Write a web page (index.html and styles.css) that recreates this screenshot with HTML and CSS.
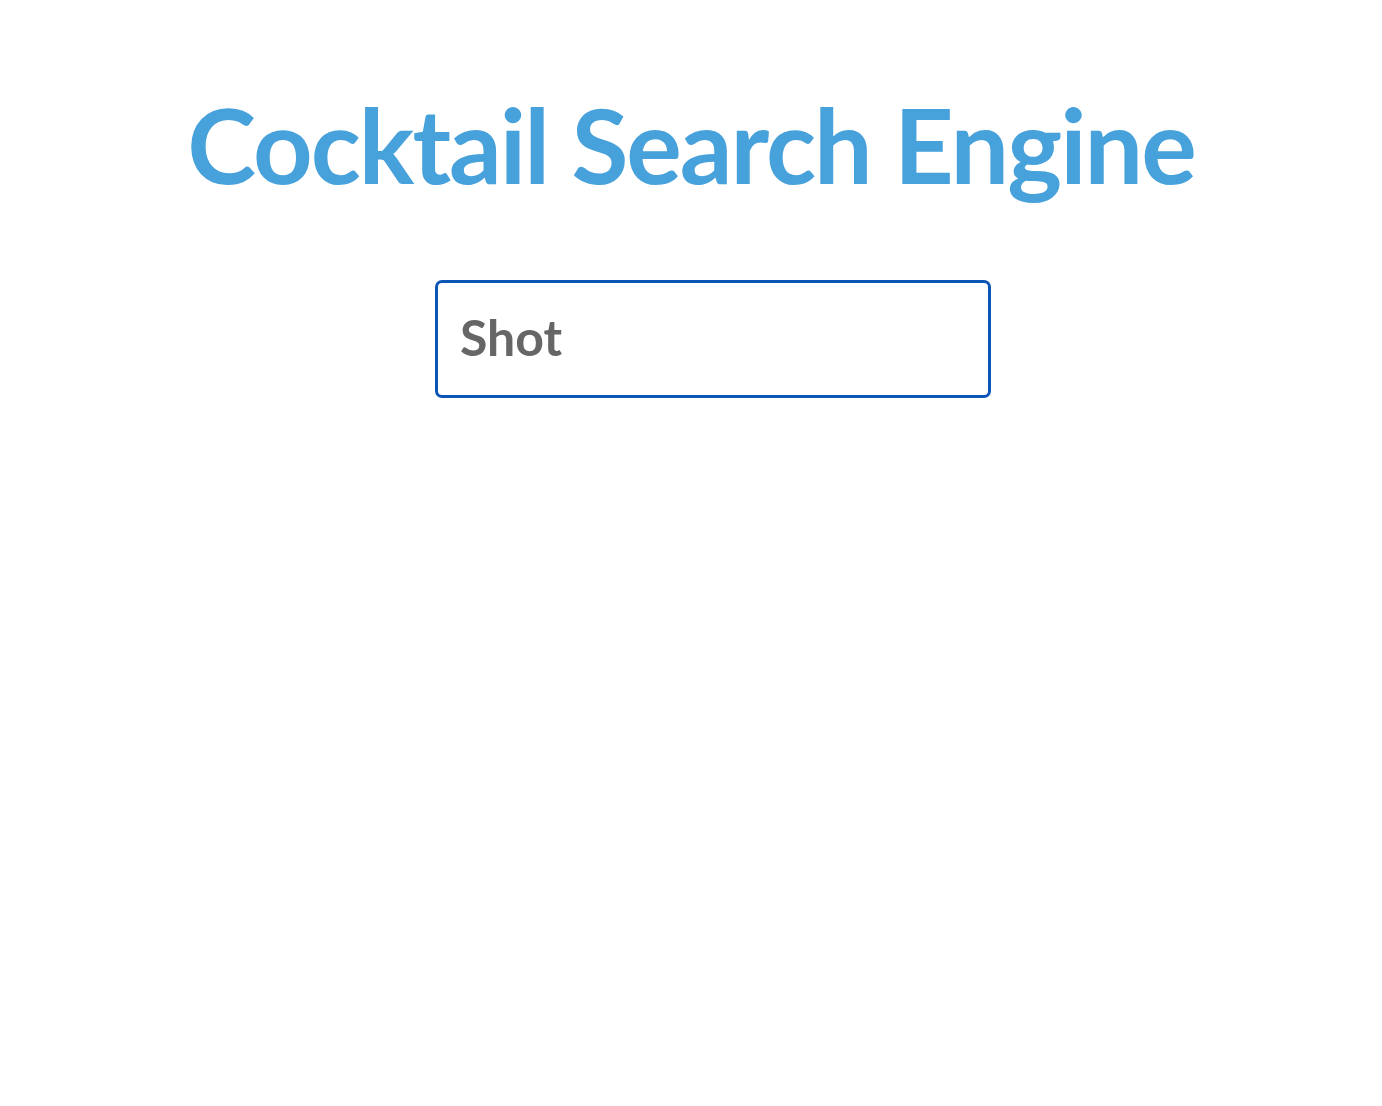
FILE: index.html
```html
<!DOCTYPE html>
<html lang="en">
<head>
<meta charset="utf-8">
<title>Cocktail Search Engine</title>
<link rel="stylesheet" href="styles.css">
</head>
<body>
<main class="app">
  <h1 class="title">Cocktail Search Engine</h1>
  <form class="search">
    <input class="search-input" type="text" value="Shot">
  </form>
</main>
</body>
</html>
```
FILE: styles.css
```css
* { box-sizing: border-box; }
html, body { margin: 0; padding: 0; background: #fff; }
body { font-family: "Lato", "Noto Sans", sans-serif; }
.app {
  display: flex;
  flex-direction: column;
  align-items: center;
  padding-top: 84px;
}
.title {
  margin: 0;
  font-size: 104px;
  font-weight: 700;
  line-height: 120px;
  color: #47a1db;
  letter-spacing: -2px;
}
.search {
  margin-top: 76px;
  padding-left: 44px;
}
.search-input {
  display: block;
  width: 556px;
  height: 118px;
  border: 3px solid #0a55b5;
  border-radius: 7px;
  padding: 0 22px 4px;
  font-family: "Lato", "Noto Sans", sans-serif;
  font-size: 50px;
  font-weight: 700;
  color: #666;
  outline: none;
  background: #fff;
}
```
